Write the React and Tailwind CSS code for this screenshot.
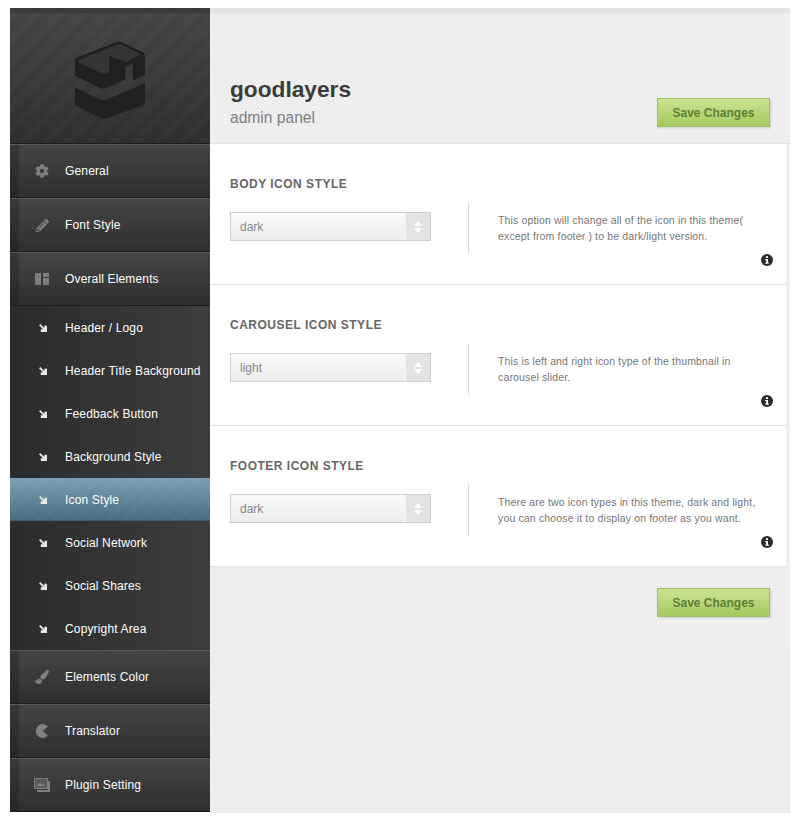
import React from 'react';
import { FaCog, FaPencilAlt, FaPaintBrush } from 'react-icons/fa';

const SUB_ITEMS = [
  'Header / Logo',
  'Header Title Background',
  'Feedback Button',
  'Background Style',
  'Icon Style',
  'Social Network',
  'Social Shares',
  'Copyright Area',
];

const SECTIONS = [
  {
    title: 'BODY ICON STYLE',
    value: 'dark',
    lines: ['This option will change all of the icon in this theme(', 'except from footer ) to be dark/light version.'],
  },
  {
    title: 'CAROUSEL ICON STYLE',
    value: 'light',
    lines: ['This is left and right icon type of the thumbnail in', 'carousel slider.'],
  },
  {
    title: 'FOOTER ICON STYLE',
    value: 'dark',
    lines: ['There are two icon types in this theme, dark and light,', 'you can choose it to display on footer as you want.'],
  },
];

const LIGHT_HATCH =
  'bg-[repeating-linear-gradient(135deg,#f2f2f2_0px,#f2f2f2_1.4142px,#eaeaea_1.4142px,#eaeaea_2.8284px)]';

function Logo() {
  return (
    <svg width="70" height="78" viewBox="45 33 210 234">
      <path
        d="M45 97Q45 85 56 80L170 36Q178 33 186 37L246 66Q255 70 255 80V134L218 152V100L196 110V148L140 174Q130 178 120 174L45 138Z"
        fill="#202020"
      />
      <path
        d="M53 92L170 44Q178 41 186 45L243 73L218 86L198 96L148 78V122Q148 130 130 131L56 98Z"
        fill="#353535"
      />
      <path d="M45 172L118 208Q130 213 142 208L255 160V214Q255 222 246 226L142 265Q132 268 122 264L50 228Q45 225 45 218Z" fill="#202020" />
    </svg>
  );
}

function ElementsIcon() {
  return (
    <svg width="14" height="12" viewBox="0 0 14 12">
      <rect x="0" y="0" width="6" height="12" fill="#7d7d7d" />
      <rect x="8" y="0" width="6" height="4" fill="#7d7d7d" />
      <rect x="8" y="5" width="6" height="7" fill="#7d7d7d" />
    </svg>
  );
}

function PacmanIcon() {
  return (
    <svg width="14" height="14" viewBox="0 0 14 14">
      <path d="M13 2.4A7 7 0 1 0 13 11.6L7.6 7Z" fill="#808080" />
    </svg>
  );
}

function PluginIcon() {
  return (
    <svg width="16" height="14" viewBox="0 0 16 14">
      <rect x="0.5" y="0.5" width="13" height="10" fill="#5a5a5a" stroke="#808080" />
      <path d="M3 8L6 5L8 7L10 6L11 8Z" fill="#8a8a8a" />
      <path d="M15 3V13H3" fill="none" stroke="#808080" strokeWidth="2" />
    </svg>
  );
}

function ArrowIcon() {
  return (
    <svg width="8" height="8" viewBox="0 0 9 9">
      <path d="M0 1.5L1.5 0L6 4.5V2H9V9H2V6H4.5Z" fill="#e8e8e8" />
    </svg>
  );
}

function InfoIcon() {
  return (
    <svg width="12" height="12" viewBox="0 0 12 12">
      <circle cx="6" cy="6" r="6" fill="#2b2b2b" />
      <rect x="5" y="2.2" width="2" height="1.8" fill="#fff" />
      <path d="M4.2 5H7V8.6H7.8V9.8H4.4V8.6H5.2V6.2H4.2Z" fill="#fff" />
    </svg>
  );
}

function MenuItem({ icon, label }) {
  return (
    <div className="flex h-[54px] border-t border-t-[#5a5a5a] border-b border-b-[#1c1c1c] bg-gradient-to-b from-[#454545] to-[#2f2f2f]">
      <div className="w-[9px] bg-gradient-to-b from-[#383838] to-[#262626]" />
      <div className="flex w-[37px] items-center justify-center pl-[9px]">{icon}</div>
      <span className="self-center pl-[9px] text-xs tracking-[0.15px] text-white">{label}</span>
    </div>
  );
}

function SubItem({ label, active }) {
  return (
    <div
      className={`flex h-[43px] items-center text-xs tracking-[0.15px] text-white ${
        active
          ? 'bg-[repeating-linear-gradient(135deg,#ffffff06_0px,#ffffff06_6px,#0000_6px,#0000_12px),linear-gradient(to_bottom,#7c9fb3,#466a80)] shadow-[inset_0_-1px_0_#3d5c70]'
          : ''
      }`}
    >
      <div className="flex w-[37px] justify-end">
        <ArrowIcon />
      </div>
      <span className="pl-[18px]">{label}</span>
    </div>
  );
}

function SaveButton() {
  return (
    <button
      type="button"
      className="h-[29px] w-[113px] border border-[#9cc066] bg-gradient-to-b from-[#cce38f] to-[#a3cb5f] text-xs font-bold text-[#5f7f38] shadow-[1px_1px_2px_#0002]"
    >
      Save Changes
    </button>
  );
}

function OptionSection({ title, value, lines }) {
  return (
    <section className="relative flex h-[141px] flex-col border-b border-[#e3e3e3] bg-white pl-5 pr-1 pt-[33px]">
      <h3 className="text-xs leading-[14px] font-bold tracking-[0.5px] text-[#666]">{title}</h3>
      <div className="mt-[11px] flex">
        <div className="w-[238px] pt-[10px]">
          <div className="flex h-[29px] w-[201px] border border-[#d0d0d0] bg-gradient-to-b from-[#fbfbfb] to-[#ececec]">
            <span className="flex-1 pl-[9px] text-xs leading-[29px] text-[#888]">{value}</span>
            <div className="flex w-[26px] flex-col items-center justify-center gap-[2px] border-l-2 border-l-[#f4f4f4] bg-[#e3e3e3]">
              <div className="h-0 w-0 border-x-[4px] border-b-[5px] border-x-transparent border-b-white" />
              <div className="h-0 w-0 border-x-[4px] border-t-[5px] border-x-transparent border-t-white" />
            </div>
          </div>
        </div>
        <div className="h-[52px] w-px bg-[#dcdcdc]" />
        <div className="pl-[29px] pt-[10px] text-[10.5px] leading-4 tracking-[0.15px] text-[#777]">
          {lines.map((line) => (
            <p key={line}>{line}</p>
          ))}
        </div>
      </div>
      <div className="absolute right-[13px] bottom-[18px]">
        <InfoIcon />
      </div>
    </section>
  );
}

export default function App() {
  return (
    <div className="min-h-[821px] bg-white pt-2 pl-2.5 font-['Liberation_Sans',Arial,sans-serif]">
      <div className="flex w-[780px]">
        {/* Sidebar */}
        <aside className="w-[200px] pb-px">
          <div className="h-[5px] bg-[#3c3c3c]" />
          <div className="flex h-[130px] items-center justify-center bg-[repeating-linear-gradient(135deg,#ffffff05_0px,#ffffff05_8px,#0000_8px,#0000_16px),linear-gradient(to_bottom,#444444,#2e2e2e)] pt-1">
            <Logo />
          </div>
          <div className="h-px bg-[#1c1c1c]" />
          <MenuItem icon={<FaCog size={14} color="#808080" />} label="General" />
          <MenuItem icon={<FaPencilAlt size={13} color="#808080" />} label="Font Style" />
          <MenuItem icon={<ElementsIcon />} label="Overall Elements" />
          <div className="bg-[repeating-linear-gradient(135deg,#ffffff06_0px,#ffffff06_0.7071px,#0000_0.7071px,#0000_2.8284px),linear-gradient(to_right,#2a2a2a,#3c3c3c)]">
            {SUB_ITEMS.map((label) => (
              <SubItem key={label} label={label} active={label === 'Icon Style'} />
            ))}
          </div>
          <MenuItem icon={<FaPaintBrush size={14} color="#808080" />} label="Elements Color" />
          <MenuItem icon={<PacmanIcon />} label="Translator" />
          <MenuItem icon={<PluginIcon />} label="Plugin Setting" />
        </aside>

        {/* Main */}
        <main className="flex w-[580px] flex-col bg-[#ededed]">
          <div className="h-[5px] bg-[#e3e3e3]" />
          <header className={`flex h-[131px] items-end justify-between border-b border-[#e3e3e3] pr-5 pb-[16px] pl-5 ${LIGHT_HATCH}`}>
            <div className="-mb-px">
              <h1 className="text-[22.7px] leading-7 font-bold text-[#3b3b3b]">goodlayers</h1>
              <p className="mt-[5px] text-[15.6px] leading-5 text-[#808080]">admin panel</p>
            </div>
            <SaveButton />
          </header>
          <div className="border-r-4 border-r-[#efefef]">
            {SECTIONS.map((section) => (
              <OptionSection key={section.title} {...section} />
            ))}
          </div>
          <div className={`flex h-[76px] justify-end pt-[21px] pr-5 ${LIGHT_HATCH}`}>
            <SaveButton />
          </div>
          <div className="flex-1" />
        </main>
      </div>
    </div>
  );
}
